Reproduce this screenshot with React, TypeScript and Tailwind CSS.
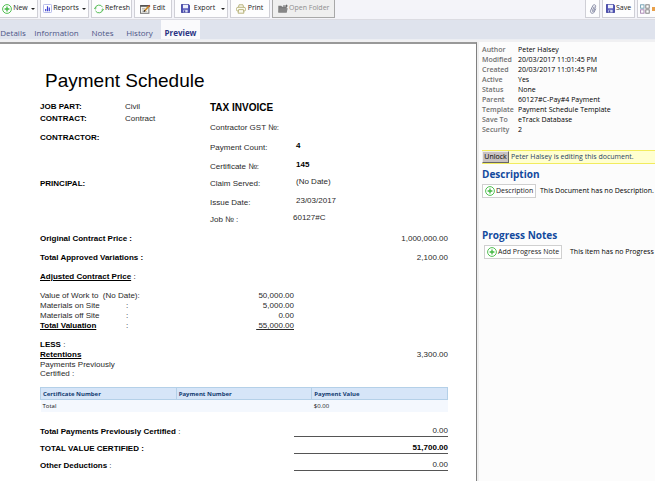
import type { ReactNode } from "react";

function PlusCircle({ className }: { className: string }) {
  return (
    <svg viewBox="0 0 10 10" className={className} fill="none" stroke="#3fb83f" aria-hidden="true">
      <circle cx="5" cy="5" r="4.4" strokeWidth="0.9" />
      <path d="M5 2.6v4.8M2.6 5h4.8" strokeWidth="1.3" />
    </svg>
  );
}

function ReportsIcon() {
  return (
    <svg viewBox="0 0 10 10" className="size-[9px] shrink-0" aria-hidden="true">
      <rect x="0.5" y="0.5" width="9" height="9" rx="1" fill="#fff" stroke="#a9b0e6" />
      <path d="M3 8V5.5M5 8V2.5M7 8V4" stroke="#3b3fd0" strokeWidth="1.3" />
    </svg>
  );
}

function RefreshIcon() {
  return (
    <svg viewBox="0 0 10 10" className="size-[10px] shrink-0" fill="none" stroke="#55bd55" aria-hidden="true">
      <path d="M1.1 4.6A4 4 0 0 1 8.6 3.2M8.9 5.4A4 4 0 0 1 1.5 6.9" strokeWidth="1" />
      <path d="M0 3.6l1.1 1.6 1.5-1.3M10 6.4L8.9 4.8 7.4 6.1" strokeWidth="0.8" />
    </svg>
  );
}

function EditIcon() {
  return (
    <svg viewBox="0 0 11 10" className="h-[10px] w-[11px] shrink-0" aria-hidden="true">
      <rect x="0.5" y="1.5" width="8.4" height="7.8" fill="#f4f4ee" stroke="#777" />
      <path d="M0.5 2h8.4" stroke="#444" strokeWidth="1.4" />
      <path d="M2 4.5h3M2 6h2.4M2 7.6h5" stroke="#999" strokeWidth="0.6" />
      <path d="M4.4 7L9 2.2" stroke="#c98a2b" strokeWidth="1.8" />
      <path d="M3.8 7.6l1.2-1.2" stroke="#222" strokeWidth="1.3" />
      <path d="M8.8 2.4l1-1" stroke="#a33b2b" strokeWidth="1.8" />
    </svg>
  );
}

function DiskIcon() {
  return (
    <svg viewBox="0 0 10 10" className="size-[9px] shrink-0" aria-hidden="true">
      <path d="M0.5 0.5h8l1 1v8h-9z" fill="#5053b8" stroke="#3e419c" />
      <rect x="2.2" y="0.8" width="5.6" height="4" fill="#eef0fb" />
      <rect x="2.6" y="6.4" width="4.8" height="3" fill="#d5d8f0" />
      <rect x="3.4" y="7" width="1.3" height="2.4" fill="#3e419c" />
    </svg>
  );
}

function PrintIcon() {
  return (
    <svg viewBox="0 0 10 10" className="size-[10px] shrink-0" fill="#fbfaf0" stroke="#b3ae74" strokeWidth="0.9" aria-hidden="true">
      <path d="M2.5 3.5L3 0.8h4l0.5 2.7" />
      <rect x="0.5" y="3.3" width="9" height="3.8" rx="1.4" />
      <path d="M2.6 5.6h4.8l0.5 3.6H2.1z" />
    </svg>
  );
}

function FolderIcon() {
  return (
    <svg viewBox="0 0 10 9" className="h-[9px] w-[10px] shrink-0" aria-hidden="true">
      <path d="M0.3 1.8h3l0.8 0.9h4.6v5.8H0.3z" fill="#7b7b7b" />
      <path d="M5 1.4h3V0.2L9.9 2 8 3.6V2.6H5z" fill="#666" />
      <path d="M0.3 8.5l1.5-4.2h8L8.6 8.5z" fill="#868686" />
    </svg>
  );
}

function ClipIcon() {
  return (
    <svg viewBox="0 0 8 10" className="h-[10px] w-[8px]" fill="none" stroke="#7b7f9c" strokeWidth="0.9" aria-hidden="true">
      <path d="M5.2 2.6L3.3 6.7c-.4.9.8 1.4 1.2.6l2-4.4C7.4.8 4.7-.1 3.8 1.7L1.6 6.5C.6 9 4 10.4 5.1 8.2L6.8 4.6" />
    </svg>
  );
}

function GridIcon() {
  return (
    <svg viewBox="0 0 10 10" className="size-[10px] shrink-0" fill="#fff" strokeWidth="0.9" aria-hidden="true">
      <rect x="0.6" y="0.8" width="3.4" height="3.4" stroke="#6c9cb0" />
      <rect x="5.8" y="0.8" width="3.4" height="3.4" stroke="#777" />
      <rect x="0.6" y="5.8" width="3.4" height="3.4" stroke="#a37fae" />
      <rect x="5.8" y="5.8" width="3.4" height="3.4" stroke="#777" />
    </svg>
  );
}

function ToolButton({
  icon,
  label,
  width,
  menu = false,
  disabled = false,
}: {
  icon: ReactNode;
  label: string;
  width: string;
  menu?: boolean;
  disabled?: boolean;
}) {
  const tone = disabled ? "border-[#a8a8a8] bg-[#efefef] text-[#8e8e8e]" : "border-[#cfcfd6] bg-[#fdfdfe] text-[#222]";
  return (
    <button
      type="button"
      disabled={disabled}
      className={`flex h-[18px] shrink-0 items-center gap-px border border-t-0 text-[7px] ${tone} ${width}`}
    >
      {icon}
      <span className="grow whitespace-nowrap text-center">{label}</span>
      {menu && <span className="ml-[2px] border-x-2 border-t-2 border-x-transparent border-t-[#222]" />}
    </button>
  );
}

const tabs = [
  { label: "Details", width: "w-[26px]" },
  { label: "Information", width: "w-[61px]" },
  { label: "Notes", width: "w-[31px]" },
  { label: "History", width: "w-[43px]" },
];

const invoice = [
  { label: "Contractor GST №:", value: "", height: "h-5", look: "" },
  { label: "Payment Count:", value: "4", height: "h-[19px]", look: "font-bold text-black" },
  { label: "Certificate №:", value: "145", height: "h-[17px]", look: "font-bold text-black" },
  { label: "Claim Served:", value: "(No Date)", height: "h-[19px]", look: "" },
  { label: "Issue Date:", value: "23/03/2017", height: "h-[17px]", look: "" },
  { label: "Job № :", value: "60127#C", height: "h-3", look: "-ml-[3px]" },
];

const details = [
  ["Author", "Peter Halsey"],
  ["Modified", "20/03/2017 11:01:45 PM"],
  ["Created", "20/03/2017 11:01:45 PM"],
  ["Active", "Yes"],
  ["Status", "None"],
  ["Parent", "60127#C-Pay#4 Payment"],
  ["Template", "Payment Schedule Template"],
  ["Save To", "eTrack Database"],
  ["Security", "2"],
];

const totals = [
  { label: "Total Payments Previously Certified", colon: false, value: "0.00", bold: false },
  { label: "TOTAL VALUE CERTIFIED :", colon: true, value: "51,700.00", bold: true },
  { label: "Other Deductions", colon: false, value: "0.00", bold: false },
];

function Toolbar() {
  return (
    <header className="flex h-5 items-start gap-[2px] overflow-hidden border-b border-[#dcdce2] bg-[#f4f4f9]">
      <ToolButton icon={<PlusCircle className="size-[10px] shrink-0" />} label="New" width="w-[38px] border-l-0 px-[2px]" menu />
      <ToolButton icon={<ReportsIcon />} label="Reports" width="w-[49px] px-[2px]" menu />
      <ToolButton icon={<RefreshIcon />} label="Refresh" width="w-[41px] px-[2px]" />
      <ToolButton icon={<EditIcon />} label="Edit" width="w-[38px] px-[5px]" />
      <ToolButton icon={<DiskIcon />} label="Export" width="w-[54px] pl-[6px] pr-[2px]" menu />
      <ToolButton icon={<PrintIcon />} label="Print" width="w-[40px] px-[5px]" />
      <ToolButton icon={<FolderIcon />} label="Open Folder" width="w-[63px] px-[5px]" disabled />
      <div className="ml-auto flex gap-[2px]">
        <button type="button" aria-label="Attach" className="flex h-[18px] w-[15px] items-center justify-center border border-t-0 border-[#cfcfd6] bg-[#fdfdfe]">
          <ClipIcon />
        </button>
        <ToolButton icon={<DiskIcon />} label="Save" width="w-[33px] px-[3px]" />
        <button type="button" aria-label="Layout" className="flex h-[18px] w-[18px] items-center gap-[2px] overflow-hidden border border-r-0 border-t-0 border-[#cfcfd6] bg-[#fdfdfe] pl-[2px]">
          <GridIcon />
          <span className="h-1 w-1 shrink-0 bg-[#e8a04a]" />
        </button>
      </div>
    </header>
  );
}

function TabBar() {
  return (
    <nav className="flex h-5 items-stretch border-b border-[#eceef3] bg-[#dfe3ed] text-[8px] text-[#4d5586]">
      {tabs.map((t) => (
        <a key={t.label} href="#" className={`flex items-center justify-center pt-[6px] ${t.width}`}>
          {t.label}
        </a>
      ))}
      <a href="#" className="flex w-[39px] items-center justify-center bg-[#fafafc] pt-[6px] font-bold text-[#2c3585]">
        Preview
      </a>
    </nav>
  );
}

function Line({ label, amount }: { label: ReactNode; amount?: string }) {
  return (
    <div className="flex h-[19px] items-center justify-between">
      <dt className="font-bold text-black">{label}</dt>
      {amount && <dd>{amount}</dd>}
    </div>
  );
}

function SubLine({ label, colon, amount }: { label: ReactNode; colon?: boolean; amount: ReactNode }) {
  return (
    <div className="flex w-[254px] whitespace-pre">
      <dt className={colon ? "w-[86px]" : ""}>{label}</dt>
      {colon && <span>:</span>}
      <dd className="ml-auto">{amount}</dd>
    </div>
  );
}

function Schedule() {
  return (
    <article className="min-w-0 flex-1 overflow-hidden border-r border-t-2 border-r-[#808080] border-t-[#999] bg-white pl-10 pr-7 pt-[25px] font-['Liberation_Sans',Arial,sans-serif] text-[8px] leading-[10px] text-[#2a2a2a]">
      <h1 className="pl-[5px] text-[19px] leading-6 text-black">Payment Schedule</h1>

      <div className="mt-2 flex leading-3">
        <dl className="grid w-[170px] content-start grid-cols-[85px_1fr]">
          <dt className="font-bold text-black">JOB PART:</dt>
          <dd>Civil</dd>
          <dt className="font-bold text-black">CONTRACT:</dt>
          <dd>Contract</dd>
          <dt className="col-span-2 mt-[7px] font-bold text-black">CONTRACTOR:</dt>
          <dt className="col-span-2 mt-[34px] font-bold text-black">PRINCIPAL:</dt>
        </dl>
        <section className="flex-1">
          <h2 className="text-[10px] font-bold leading-[14px] text-black">TAX INVOICE</h2>
          <dl className="mt-[7px]">
            {invoice.map((row) => (
              <div key={row.label} className={`flex ${row.height}`}>
                <dt className="w-[86px]">{row.label}</dt>
                <dd className={`leading-[8px] ${row.look}`}>{row.value}</dd>
              </div>
            ))}
          </dl>
        </section>
      </div>

      <dl className="mt-[3px]">
        <Line label="Original Contract Price :" amount="1,000,000.00" />
        <Line label="Total Approved Variations :" amount="2,100.00" />
        <Line
          label={
            <>
              <u>Adjusted Contract Price</u> <span className="font-normal">:</span>
            </>
          }
        />
      </dl>

      <dl className="mt-[5px]">
        <SubLine label="Value of Work to  (No Date):" amount="50,000.00" />
        <SubLine label="Materials on Site" colon amount="5,000.00" />
        <SubLine label="Materials off Site" colon amount="0.00" />
        <SubLine label={<u className="font-bold text-black">Total Valuation</u>} colon amount={<u>{" 55,000.00"}</u>} />
      </dl>

      <p className="mt-[9px]">
        <b className="text-black">LESS</b> :
      </p>
      <div className="flex justify-between">
        <u className="font-bold text-black">Retentions</u>
        <span>3,300.00</span>
      </div>
      <p className="w-20 leading-[9px]">Payments Previously Certified :</p>

      <table className="mt-[9px] w-full table-fixed border-collapse text-left font-['Open_Sans','Noto_Sans',sans-serif] text-[6px] leading-[10px] text-[#111]">
        <thead>
          <tr className="h-3 bg-[#d6e5f8] text-[#123a70]">
            <th className="border border-[#b4d0e8] px-[2px]">Certificate Number</th>
            <th className="border border-[#b4d0e8] px-[2px]">Payment Number</th>
            <th className="border border-[#b4d0e8] px-[2px]">Payment Value</th>
          </tr>
        </thead>
        <tbody>
          <tr className="h-3 bg-[#f4f8fe]">
            <td className="px-[2px]">Total</td>
            <td />
            <td className="px-[2px]">$0.00</td>
          </tr>
        </tbody>
      </table>

      <dl className="mt-2">
        {totals.map((t) => (
          <div key={t.label} className="flex h-[17px] items-end justify-between">
            <dt>
              <b className="text-black">{t.label}</b>
              {!t.colon && " :"}
            </dt>
            <dd className={`w-[154px] border-b border-[#555] text-right ${t.bold ? "font-bold text-black" : ""}`}>{t.value}</dd>
          </div>
        ))}
      </dl>
    </article>
  );
}

function AddButton({ label, width }: { label: string; width: string }) {
  return (
    <button type="button" className={`flex h-[14px] shrink-0 items-center gap-px border border-[#d0d0d0] bg-white px-[2px] text-[#222] ${width}`}>
      <PlusCircle className="size-[10px] shrink-0" />
      <span className="whitespace-nowrap">{label}</span>
    </button>
  );
}

function SidePanel() {
  return (
    <aside className="w-[178px] shrink-0 overflow-hidden border-l-2 border-[#efefef] bg-[#fcfcfc] pl-[3px] pt-[3px] text-[7px] leading-[10px] text-black">
      <dl className="grid grid-cols-[36px_1fr] whitespace-nowrap">
        {details.map(([k, v]) => (
          <div key={k} className="contents">
            <dt className="font-semibold text-[#707070]">{k}</dt>
            <dd>{v}</dd>
          </div>
        ))}
      </dl>

      <div className="mt-[15px] flex h-[14px] items-center gap-[2px] border-y border-[#f2ec5e] bg-[#ffffd0] whitespace-nowrap">
        <button type="button" className="h-3 w-[27px] border border-b-[#666] border-l-[#eee] border-r-[#666] border-t-[#eee] bg-[#c9c2c2] leading-[10px]">
          Unlock
        </button>
        <p className="text-[#1f3f66]">Peter Halsey is editing this document.</p>
      </div>

      <section>
        <h2 className="mt-1 text-[10px] font-bold leading-3 text-[#134a9e]">Description</h2>
        <div className="mt-1 flex items-center gap-1 whitespace-nowrap">
          <AddButton label="Description" width="w-[54px]" />
          <p>This Document has no Description.</p>
        </div>
      </section>

      <section>
        <h2 className="mt-[31px] text-[10px] font-bold leading-3 text-[#134a9e]">Progress Notes</h2>
        <div className="mt-1 flex items-center gap-2 whitespace-nowrap pl-[2px]">
          <AddButton label="Add Progress Note" width="w-[78px]" />
          <p>This item has no Progress</p>
        </div>
      </section>
    </aside>
  );
}

export default function App() {
  return (
    <div className="flex min-h-screen flex-col bg-[#f0f0f2] font-['Open_Sans','Noto_Sans',sans-serif]">
      <Toolbar />
      <TabBar />
      <main className="mt-[2px] flex flex-1">
        <Schedule />
        <SidePanel />
      </main>
    </div>
  );
}
